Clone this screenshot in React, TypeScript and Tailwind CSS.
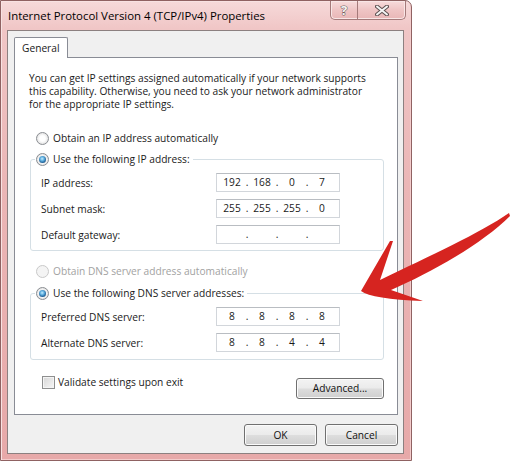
import React from "react";

const FONT = "font-['Open_Sans',sans-serif]";

function Radio({ checked, disabled }: { checked?: boolean; disabled?: boolean }) {
  return (
    <span
      className={
        "flex h-[13px] w-[13px] shrink-0 items-center justify-center rounded-full border " +
        (disabled
          ? "border-[#c9c9c9] bg-[#f4f4f4]"
          : "border-[#8a8d92] bg-[radial-gradient(circle_at_50%_50%,#ffffff_35%,#e6e6e6_70%,#d0d0d0)]")
      }
    >
      {checked && (
        <span className="h-[7px] w-[7px] rounded-full bg-[radial-gradient(circle_at_45%_40%,#c6ecff_0%,#5fb0e0_35%,#1d5d94_70%,#103858)]" />
      )}
    </span>
  );
}

function IpBox({ parts }: { parts: string[] }) {
  return (
    <div className="flex h-[19px] w-[124px] items-center border border-[#d2d6db] border-t-[#b9bdc2] bg-white pl-[3px] text-[10.2px] text-[#1a1a1a]">
      {parts.map((p, i) => (
        <React.Fragment key={i}>
          <span className="w-[24px] text-center">{p}</span>
          {i < 3 && <span className="w-[6px] text-center">.</span>}
        </React.Fragment>
      ))}
    </div>
  );
}

function Btn({ label, w, h }: { label: string; w: string; h: string }) {
  return (
    <div
      className={
        w +
        " " +
        h +
        " flex items-center justify-center rounded-[3px] border border-[#707070] bg-[linear-gradient(to_bottom,#f3f3f3_0%,#ebebeb_48%,#dddddd_52%,#cfcfcf_100%)] text-[10.2px] text-[#111] shadow-[inset_0_0_0_1px_#fbfbfb]"
      }
    >
      {label}
    </div>
  );
}

function Row({ label, parts, first }: { label: string; parts: string[]; first?: boolean }) {
  return (
    <div className={"flex h-[19px] items-center " + (first ? "mt-[6px]" : "mt-[7px]")}>
      <span className="w-[175px] pt-[1px]">{label}</span>
      <IpBox parts={parts} />
    </div>
  );
}

export default function App() {
  return (
    <div className={"relative h-[461px] w-[511px] overflow-hidden bg-white text-[#1a1a1a] " + FONT}>
      {/* window frame */}
      <div className="flex h-[461px] w-[412px] flex-col rounded-tr-[7px] border border-[#8f6262] bg-[linear-gradient(to_bottom,#f6dada_0%,#f0c6c6_6%,#ebb6b6_40%,#e7a9a9_100%)] pb-[6px] pl-[6px] pr-[7px] shadow-[inset_1px_1px_0_#f8e2e2,inset_-1px_-1px_0_#f3cccc]">
        {/* title bar */}
        <div className="flex h-[29px] items-start">
          <div className="pl-[1px] pt-[7px] text-[11.4px] leading-[15px] text-black">
            Internet Protocol Version 4 (TCP/IPv4) Properties
          </div>
          <div className="ml-auto mr-[-2px] flex h-[19px] overflow-hidden rounded-b-[5px] border border-t-0 border-[#a47a7a] bg-[linear-gradient(to_bottom,#f7dcdc,#efc4c4_50%,#e9b7b7)] shadow-[inset_0_0_0_1px_#f9e6e6]">
            <div className="flex w-[27px] items-center justify-center border-r border-[#a47a7a] text-[13px] font-bold leading-none text-[#f4f4f4] [-webkit-text-stroke:1px_#6a5a5a] [paint-order:stroke_fill]">
              ?
            </div>
            <div className="flex w-[47px] items-center justify-center">
              <svg width="14" height="11" viewBox="0 0 14 11">
                <path d="M2 1.5 L12 9.5 M12 1.5 L2 9.5" stroke="#5e5252" strokeWidth="4" strokeLinecap="round" />
                <path d="M2 1.5 L12 9.5 M12 1.5 L2 9.5" stroke="#f5f5f5" strokeWidth="2" strokeLinecap="round" />
              </svg>
            </div>
          </div>
        </div>

        {/* client area */}
        <div className="flex flex-1 flex-col border border-[#8c8080] bg-[#f0f0f0] pl-[6px] pt-[6px] text-[10.2px] leading-[13px]">
          {/* tab */}
          <div className="relative z-10 -mb-px flex h-[21px] w-[54px] items-center rounded-t-[2px] border border-b-0 border-[#898c95] bg-white pl-[7px]">
            General
          </div>
          {/* panel */}
          <div className="flex h-[358px] w-[384px] flex-col border border-[#898c95] bg-white pl-[15px] pr-[13px] pt-[13px]">
            <p className="-ml-px pt-[1px] leading-[13px]">
              You can get IP settings assigned automatically if your network supports
              <br />
              this capability. Otherwise, you need to ask your network administrator
              <br />
              for the appropriate IP settings.
            </p>

            <div className="mt-[19px] flex h-[16px] items-center gap-[4px] pl-[6px]">
              <Radio />
              <span>Obtain an IP address automatically</span>
            </div>

            <div className="mt-[13px] flex flex-col rounded-[3px] border border-[#d5dfe5] pb-[6px] pl-[10px]">
              <div className="-ml-[6px] -mt-[9px] flex h-[16px] items-center gap-[4px] self-start bg-white px-[1px] pr-[3px]">
                <Radio checked />
                <span>Use the following IP address:</span>
              </div>
              <Row first label="IP address:" parts={["192", "168", "0", "7"]} />
              <Row label="Subnet mask:" parts={["255", "255", "255", "0"]} />
              <Row label="Default gateway:" parts={["", "", "", ""]} />
            </div>

            <div className="mt-[12px] flex h-[16px] items-center gap-[4px] pl-[6px] text-[#a2a2a2]">
              <Radio disabled />
              <span>Obtain DNS server address automatically</span>
            </div>

            <div className="mt-[14px] flex flex-col rounded-[3px] border border-[#d5dfe5] pb-[7px] pl-[10px]">
              <div className="-ml-[6px] -mt-[9px] flex h-[16px] items-center gap-[4px] self-start bg-white px-[1px] pr-[3px]">
                <Radio checked />
                <span>Use the following DNS server addresses:</span>
              </div>
              <Row first label="Preferred DNS server:" parts={["8", "8", "8", "8"]} />
              <Row label="Alternate DNS server:" parts={["8", "8", "4", "4"]} />
            </div>

            <div className="mt-[15px] flex items-start justify-between">
              <div className="flex h-[14px] items-center gap-[3px] pl-[12px]">
                <span className="h-[13px] w-[13px] border border-[#8e8f8f] bg-[linear-gradient(135deg,#d6d6d6,#f7f7f7)] shadow-[inset_0_0_0_1px_#f4f4f4]" />
                <span>Validate settings upon exit</span>
              </div>
              <div className="mt-[3px]">
                <Btn label="Advanced..." w="w-[88px]" h="h-[21px]" />
              </div>
            </div>
          </div>

          {/* bottom buttons */}
          <div className="mt-[9px] flex w-[384px] justify-end gap-[8px]">
            <Btn label="OK" w="w-[73px]" h="h-[22px]" />
            <Btn label="Cancel" w="w-[73px]" h="h-[22px]" />
          </div>
        </div>
      </div>

      {/* red arrow overlay */}
      <svg className="pointer-events-none absolute left-0 top-0" width="511" height="461" viewBox="0 0 511 461">
        <path
          d="M 509 213 C 480 233, 430 256, 380 280 L 393 241 L 390 241 L 361 291 Q 372 299, 423 301 L 391 290 C 432 272, 482 244, 510 216 Z"
          fill="#d62420"
        />
      </svg>
    </div>
  );
}
